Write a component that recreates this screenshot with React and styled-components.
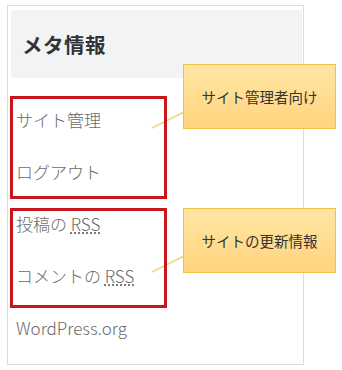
import React from "react";
import styled, { createGlobalStyle } from "styled-components";

const items = [
  { label: "サイト管理" },
  { label: "ログアウト" },
  { label: "投稿の", abbr: "RSS" },
  { label: "コメントの", abbr: "RSS" },
  { label: "WordPress.org" },
];

const marks = [
  { box: { left: 10, top: 96, width: 157, height: 103 }, note: { top: 64 }, text: "サイト管理者向け" },
  { box: { left: 10, top: 208, width: 157, height: 100 }, note: { top: 208 }, text: "サイトの更新情報" },
];

const App = () => {
  return (
    <Page>
      <GlobalStyle />
      <Card>
        <Header>メタ情報</Header>
        <List>
          {items.map((it) => (
            <Item key={it.label + (it.abbr || "")}>
              {it.label}
              {it.abbr && (
                <>
                  {" "}
                  <Abbr>{it.abbr}</Abbr>
                </>
              )}
            </Item>
          ))}
        </List>
      </Card>

      <Leaders width="342" height="370">
        <line x1="152" y1="128" x2="184" y2="112" />
        <line x1="152" y1="272" x2="184" y2="256" />
      </Leaders>

      {marks.map((m) => (
        <React.Fragment key={m.text}>
          <RedBox style={m.box} />
          <Note style={m.note}>{m.text}</Note>
        </React.Fragment>
      ))}
    </Page>
  );
};

const GlobalStyle = createGlobalStyle`
  body {
    margin: 0;
    background: #fff;
    font-family: "Noto Sans CJK JP", "Noto Sans", sans-serif;
  }
`;

const Page = styled.div`
  position: relative;
  width: 342px;
  height: 370px;
  overflow: hidden;
  padding: 5px 0 0 7px;
  box-sizing: border-box;
`;

const Card = styled.section`
  width: 297px;
  height: 360px;
  box-sizing: border-box;
  border: 1px solid #dcdcdc;
  padding: 4px 1px 0 3px;
  background: #fff;
`;

const Header = styled.h2`
  margin: 0;
  height: 68px;
  display: flex;
  align-items: center;
  padding-left: 11px;
  background: #f2f3f5;
  color: #333;
  font-size: 20.5px;
  font-weight: 700;
  letter-spacing: 0.5px;
`;

const List = styled.ul`
  list-style: none;
  margin: 0;
  padding: 16px 0 0 5px;
`;

const Item = styled.li`
  height: 52px;
  line-height: 52px;
  font-size: 17px;
  font-weight: 300;
  color: #6a6a6a;
  white-space: nowrap;
`;

const Abbr = styled.abbr`
  text-decoration: underline dotted #666;
  text-underline-offset: 2px;
`;

const Leaders = styled.svg`
  position: absolute;
  left: 0;
  top: 0;
  pointer-events: none;

  line {
    stroke: #f0d57a;
    stroke-width: 1.5;
  }
`;

const RedBox = styled.div`
  position: absolute;
  box-sizing: border-box;
  border: 3px solid #c8171c;
`;

const Note = styled.div`
  position: absolute;
  left: 183px;
  width: 153px;
  height: 65px;
  box-sizing: border-box;
  border: 1px solid #efc04a;
  background: linear-gradient(#ffe6a2, #ffd47f);
  display: flex;
  align-items: center;
  justify-content: center;
  font-size: 14.5px;
  font-weight: 400;
  color: #333;
`;

export default App;
